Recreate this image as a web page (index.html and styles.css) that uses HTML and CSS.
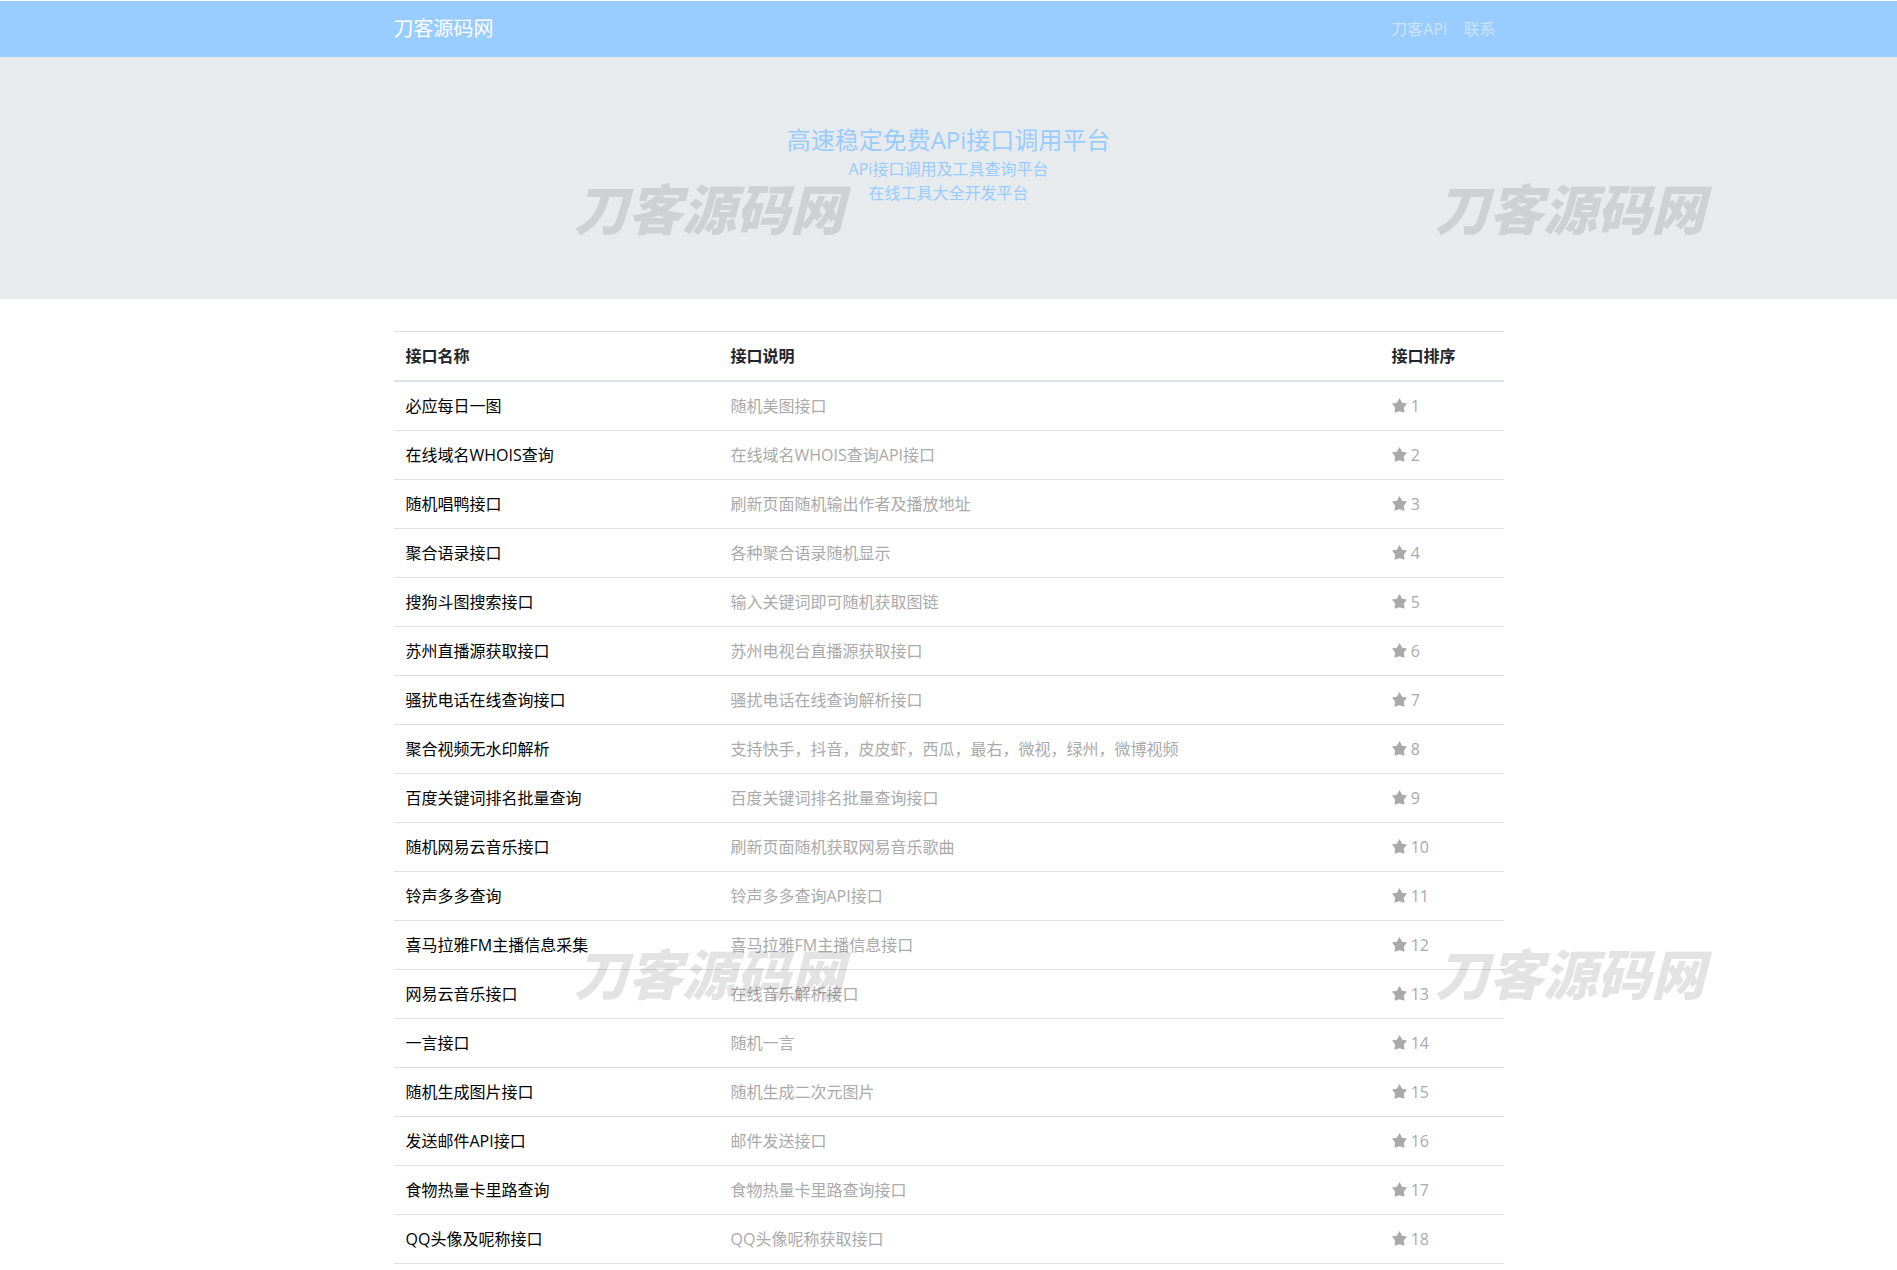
FILE: index.html
```html
<!DOCTYPE html>
<html lang="zh-CN">
<head>
<meta charset="utf-8">
<meta name="viewport" content="width=device-width, initial-scale=1">
<title>刀客源码网</title>
<link rel="stylesheet" href="styles.css">
</head>
<body>
<svg class="sprite" aria-hidden="true">
  <symbol id="star" viewBox="0 0 24 24"><path d="M12 0l4.200 7.400 7.800 1.500-5 6.100 1 8.500-8-2.500-8 2.500 1-8.500-5-6.100 7.800-1.500z"/></symbol>
</svg>
<header class="navbar">
  <div class="container navbar-inner">
    <a class="brand" href="#">刀客源码网</a>
    <nav class="nav">
      <a class="nav-link" href="#">刀客API</a>
      <a class="nav-link" href="#">联系</a>
    </nav>
  </div>
</header>
<section class="hero">
  <h1 class="hero-title">高速稳定免费APi接口调用平台</h1>
  <p class="hero-text">APi接口调用及工具查询平台</p>
  <p class="hero-text">在线工具大全开发平台</p>
</section>
<main class="container">
  <table class="table">
    <thead>
      <tr><th class="col-name">接口名称</th><th>接口说明</th><th class="col-rank">接口排序</th></tr>
    </thead>
    <tbody>
      <tr><td><a href="#">必应每日一图</a></td><td>随机美图接口</td><td><svg class="star"><use href="#star"/></svg> 1</td></tr>
      <tr><td><a href="#">在线域名WHOIS查询</a></td><td>在线域名WHOIS查询API接口</td><td><svg class="star"><use href="#star"/></svg> 2</td></tr>
      <tr><td><a href="#">随机唱鸭接口</a></td><td>刷新页面随机输出作者及播放地址</td><td><svg class="star"><use href="#star"/></svg> 3</td></tr>
      <tr><td><a href="#">聚合语录接口</a></td><td>各种聚合语录随机显示</td><td><svg class="star"><use href="#star"/></svg> 4</td></tr>
      <tr><td><a href="#">搜狗斗图搜索接口</a></td><td>输入关键词即可随机获取图链</td><td><svg class="star"><use href="#star"/></svg> 5</td></tr>
      <tr><td><a href="#">苏州直播源获取接口</a></td><td>苏州电视台直播源获取接口</td><td><svg class="star"><use href="#star"/></svg> 6</td></tr>
      <tr><td><a href="#">骚扰电话在线查询接口</a></td><td>骚扰电话在线查询解析接口</td><td><svg class="star"><use href="#star"/></svg> 7</td></tr>
      <tr><td><a href="#">聚合视频无水印解析</a></td><td>支持快手，抖音，皮皮虾，西瓜，最右，微视，绿州，微博视频</td><td><svg class="star"><use href="#star"/></svg> 8</td></tr>
      <tr><td><a href="#">百度关键词排名批量查询</a></td><td>百度关键词排名批量查询接口</td><td><svg class="star"><use href="#star"/></svg> 9</td></tr>
      <tr><td><a href="#">随机网易云音乐接口</a></td><td>刷新页面随机获取网易音乐歌曲</td><td><svg class="star"><use href="#star"/></svg> 10</td></tr>
      <tr><td><a href="#">铃声多多查询</a></td><td>铃声多多查询API接口</td><td><svg class="star"><use href="#star"/></svg> 11</td></tr>
      <tr><td><a href="#">喜马拉雅FM主播信息采集</a></td><td>喜马拉雅FM主播信息接口</td><td><svg class="star"><use href="#star"/></svg> 12</td></tr>
      <tr><td><a href="#">网易云音乐接口</a></td><td>在线音乐解析接口</td><td><svg class="star"><use href="#star"/></svg> 13</td></tr>
      <tr><td><a href="#">一言接口</a></td><td>随机一言</td><td><svg class="star"><use href="#star"/></svg> 14</td></tr>
      <tr><td><a href="#">随机生成图片接口</a></td><td>随机生成二次元图片</td><td><svg class="star"><use href="#star"/></svg> 15</td></tr>
      <tr><td><a href="#">发送邮件API接口</a></td><td>邮件发送接口</td><td><svg class="star"><use href="#star"/></svg> 16</td></tr>
      <tr><td><a href="#">食物热量卡里路查询</a></td><td>食物热量卡里路查询接口</td><td><svg class="star"><use href="#star"/></svg> 17</td></tr>
      <tr><td><a href="#">QQ头像及呢称接口</a></td><td>QQ头像呢称获取接口</td><td><svg class="star"><use href="#star"/></svg> 18</td></tr>
    </tbody>
  </table>
</main>
<div class="watermarks" aria-hidden="true">
  <span class="watermark mark-upper mark-left">刀客源码网</span>
  <span class="watermark mark-upper mark-right">刀客源码网</span>
  <span class="watermark mark-lower mark-left">刀客源码网</span>
  <span class="watermark mark-lower mark-right">刀客源码网</span>
</div>
</body>
</html>
```
FILE: styles.css
```css
*,
*::before,
*::after {
  box-sizing: border-box;
}

body {
  position: relative;
  margin: 0;
  padding-top: 1px;
  background: #fff;
  color: #212529;
  font-family: "Open Sans", "Noto Sans CJK SC", sans-serif;
  font-size: 16px;
  line-height: 24px;
}

a {
  color: inherit;
  text-decoration: none;
}

.sprite {
  display: none;
}

.container {
  width: 100%;
  max-width: 1140px;
  margin: 0 auto;
  padding: 0 15px;
}

.navbar {
  background: #99ccff;
}

.navbar-inner {
  display: flex;
  align-items: center;
  justify-content: space-between;
  min-height: 56px;
}

.brand {
  color: #fff;
  font-size: 20px;
  line-height: 30px;
}

.nav {
  display: flex;
}

.nav-link {
  padding: 8px;
  color: rgba(255, 255, 255, 0.5);
}

/* Intro banner */
.hero {
  margin-bottom: 32px;
  padding: 66px 16px 94px;
  background: #e7ebee;
  color: #99ccff;
  text-align: center;
}

.hero-title {
  margin: 0;
  font-size: 24px;
  font-weight: 400;
  line-height: 34px;
}

.hero-text {
  margin: 0;
}

/* API list */
.table {
  width: 100%;
  border-collapse: collapse;
  table-layout: fixed;
}

.table th,
.table td {
  padding: 12px;
  border-top: 1px solid #dee2e6;
  border-bottom: 1px solid #dee2e6;
  text-align: left;
  vertical-align: top;
}

.table th {
  border-bottom-width: 2px;
  font-weight: 700;
}

.table td {
  color: #aaa;
}

.table td a {
  color: #000;
}

.col-name {
  width: 325px;
}

.col-rank {
  width: 124px;
}

.star {
  width: 15px;
  height: 15px;
  fill: currentColor;
  vertical-align: -1px;
}

/* Site mark laid over the whole page */
.watermarks {
  position: absolute;
  inset: 0;
  overflow: hidden;
  pointer-events: none;
}

.watermark {
  position: absolute;
  color: rgba(0, 0, 0, 0.11);
  font-family: "Noto Sans CJK SC", sans-serif;
  font-size: 54px;
  font-style: italic;
  font-weight: 900;
  line-height: 54px;
  white-space: nowrap;
}

.mark-upper {
  top: 180px;
}

.mark-lower {
  top: 945px;
}

.mark-left {
  left: 574px;
}

.mark-right {
  left: 1435px;
}
```
